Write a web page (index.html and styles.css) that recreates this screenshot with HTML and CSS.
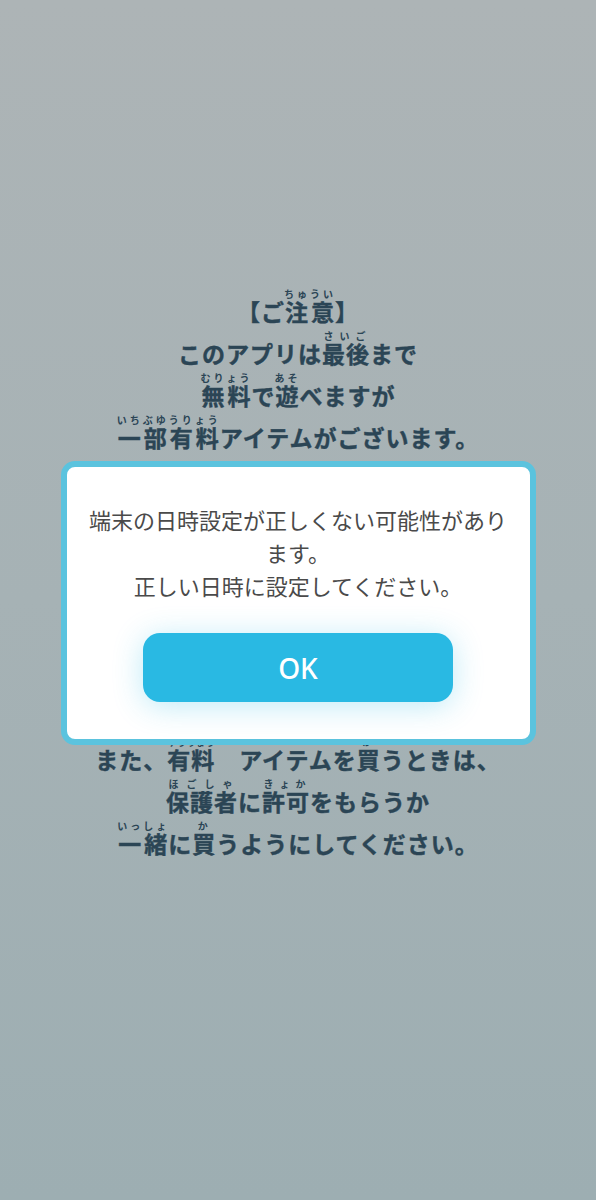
FILE: index.html
```html
<!DOCTYPE html>
<html lang="ja">
<head>
    <meta charset="UTF-8">
    <meta name="viewport" content="width=device-width, initial-scale=1.0">
    <title>ご注意</title>
    <link rel="stylesheet" href="styles.css">
</head>
<body>
    <div class="notice">
        <p>【ご<ruby>注意<rt>ちゅうい</rt></ruby>】</p>
        <p>このアプリは<ruby>最後<rt>さいご</rt></ruby>まで</p>
        <p><ruby>無料<rt>むりょう</rt></ruby>で<ruby>遊<rt>あそ</rt></ruby>べますが</p>
        <p><ruby>一部有料<rt>いちぶゆうりょう</rt></ruby>アイテムがございます。</p>

        <div class="spacer"></div>

        <p>また、<ruby>有料<rt class="tight">ゆうりょう</rt></ruby>　アイテムを<ruby>買<rt>か</rt></ruby>うときは、</p>
        <p><ruby>保護者<rt>ほごしゃ</rt></ruby>に<ruby>許可<rt>きょか</rt></ruby>をもらうか</p>
        <p><ruby>一緒<rt>いっしょ</rt></ruby>に<ruby>買<rt>か</rt></ruby>うようにしてください。</p>
    </div>

    <!-- Error dialog -->
    <div class="overlay">
        <div class="dialog">
            <p class="dialog-text">端末の日時設定が正しくない可能性があります。<br>正しい日時に設定してください。</p>
            <button class="ok-btn">OK</button>
        </div>
    </div>
</body>
</html>
```

FILE: styles.css
```css
/* Global Styles */
body {
    margin: 0;
    padding: 0;
    min-height: 1200px;
    background: linear-gradient(180deg, #adb4b6 0%, #a6b2b5 50%, #9daeb2 100%);
    font-family: "Noto Sans CJK JP", "Noto Sans", sans-serif;
}

/* Notice text behind the dialog */
.notice {
    padding-top: 289px;
    text-align: center;
    color: #2b4555;
    font-weight: bold;
    font-size: 23px;
    letter-spacing: 1px;
    -webkit-text-stroke: 0.4px #2b4555;
}

.notice p {
    margin: 0;
    height: 42px;
    line-height: 42px;
}

.notice rt {
    font-size: 10px;
    line-height: 1;
    letter-spacing: 3px;
    font-weight: bold;
    -webkit-text-stroke: 0;
}

.notice rt.tight {
    font-size: 9px;
    letter-spacing: 0;
}

.spacer {
    height: 280px;
}

/* Dialog */
.overlay {
    position: fixed;
    top: 0;
    left: 0;
    right: 0;
    bottom: 0;
    display: flex;
    align-items: center;
    justify-content: center;
    padding-top: 6px;
}

.dialog {
    box-sizing: border-box;
    width: 475px;
    background-color: #fff;
    border: 6px solid #5bc3de;
    border-radius: 14px;
    padding: 36px 20px 37px;
    display: flex;
    flex-direction: column;
    align-items: center;
}

.dialog-text {
    margin: 0 0 31px;
    font-size: 22px;
    line-height: 33px;
    color: #4a4a4a;
    text-align: center;
}

.ok-btn {
    width: 310px;
    height: 69px;
    border: none;
    border-radius: 17px;
    background-color: #29b9e3;
    color: #fff;
    font-family: "Noto Sans", sans-serif;
    font-size: 28px;
    font-weight: 500;
    box-shadow: 0 4px 30px rgba(41, 185, 227, 0.3);
    cursor: pointer;
}
```
